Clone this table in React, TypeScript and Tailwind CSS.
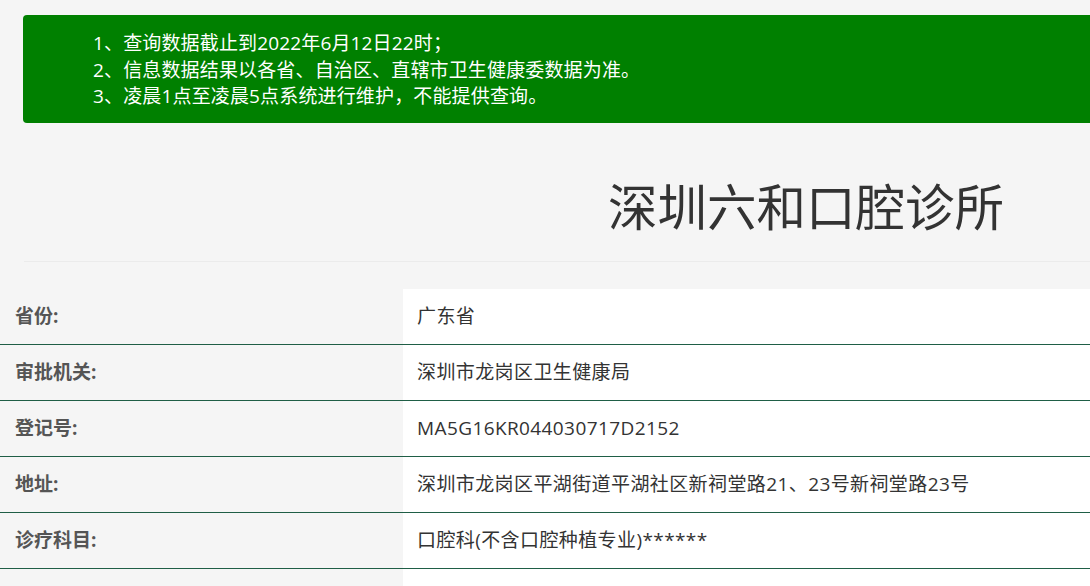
import React from 'react'

const rows = [
  { label: '省份:', value: '广东省' },
  { label: '审批机关:', value: '深圳市龙岗区卫生健康局' },
  { label: '登记号:', value: 'MA5G16KR044030717D2152' },
  { label: '地址:', value: '深圳市龙岗区平湖街道平湖社区新祠堂路21、23号新祠堂路23号' },
  { label: '诊疗科目:', value: '口腔科(不含口腔种植专业)******' },
]

export default function App() {
  return (
    <div
      className="w-[1090px] h-[586px] overflow-hidden bg-[#f5f5f5]"
      style={{ fontFamily: '"Open Sans", "Noto Sans CJK SC", sans-serif' }}
    >
      <div className="pt-[15px] pl-[23px]">
        <div className="w-[1100px] h-[108px] rounded bg-[#008000] pl-[70px] pt-[15px] text-[19px] leading-[26.5px] tracking-[0.15px] text-white">
          <div>1、查询数据截止到2022年6月12日22时；</div>
          <div>2、信息数据结果以各省、自治区、直辖市卫生健康委数据为准。</div>
          <div>3、凌晨1点至凌晨5点系统进行维护，不能提供查询。</div>
        </div>
      </div>

      <div className="ml-[24px] h-[139px] border-b border-[#ebebeb] flex items-center justify-end pr-[86px]">
        <h1 className="text-[49.5px] leading-none text-[#333] mt-[32px]">深圳六和口腔诊所</h1>
      </div>

      <div className="mt-[27px]">
        {rows.map((r) => (
          <div key={r.label} className="flex h-[56px] border-b border-[#1f5e46]">
            <div className="w-[403px] flex items-center pl-[15px] text-[19px] font-bold text-[#555]">
              {r.label}
            </div>
            <div className="flex-1 bg-white flex items-center pl-[14px] text-[19px] tracking-[0.4px] text-[#333]">
              {r.value}
            </div>
          </div>
        ))}
        <div className="flex h-[20px]">
          <div className="w-[403px]" />
          <div className="flex-1 bg-white" />
        </div>
      </div>
    </div>
  )
}
